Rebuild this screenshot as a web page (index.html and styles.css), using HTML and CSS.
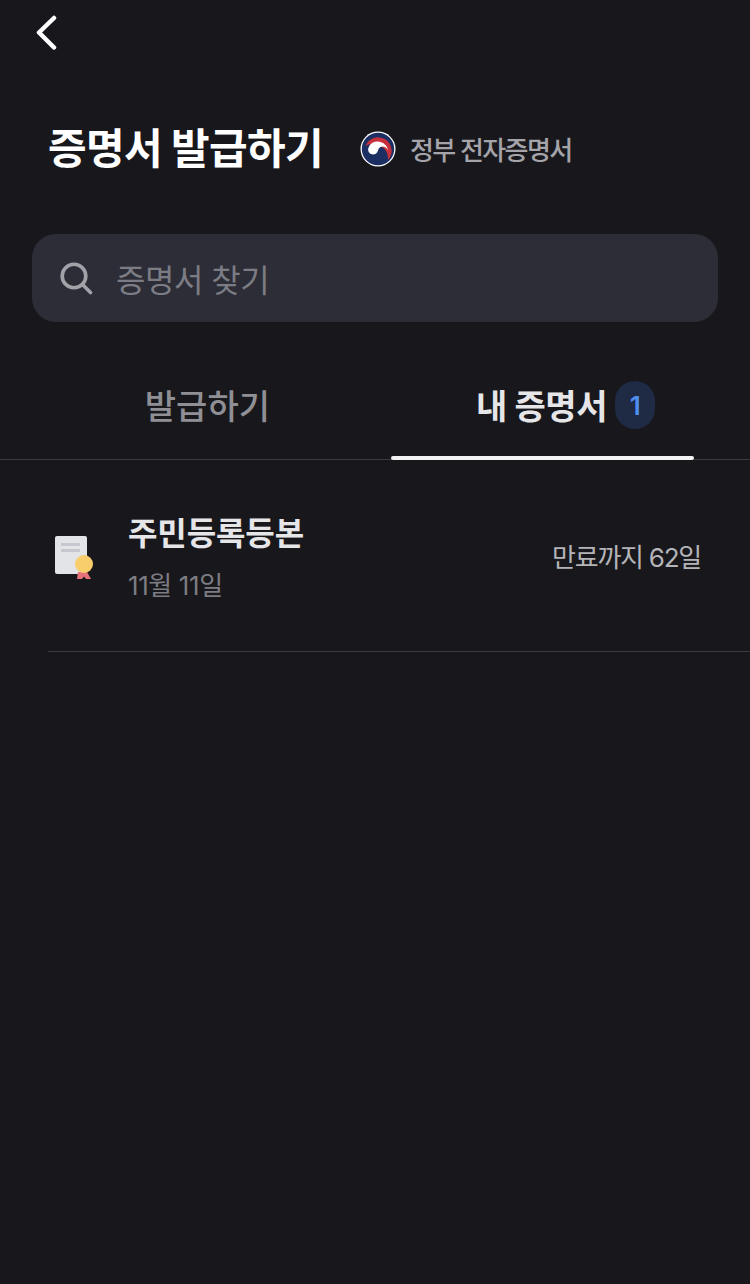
FILE: index.html
```html
<!DOCTYPE html>
<html lang="ko">
<head>
<meta charset="utf-8">
<title>증명서 발급하기</title>
<link rel="stylesheet" href="styles.css">
</head>
<body>
<div class="page">
  <div class="nav">
    <svg class="back" width="24" height="36" viewBox="0 0 24 36"><path d="M20 3 L5 17.500 L20 32.500" fill="none" stroke="#fff" stroke-width="4.500" stroke-linecap="round" stroke-linejoin="round"/></svg>
  </div>
  <div class="head">
    <h1 class="title">증명서 발급하기</h1>
    <svg class="emblem" width="36" height="36" viewBox="0 0 36 36">
      <circle cx="18" cy="18" r="17.500" fill="#fff"/>
      <circle cx="18" cy="18" r="16.200" fill="#1c2f63"/>
      <path d="M5.500 15 A13.500 13.500 0 1 1 28 29 A15 15 0 0 0 5.500 15Z" fill="#c8303c"/>
      <g transform="rotate(12 18 19.500)">
        <path d="M8 19.500 A10 9 0 0 1 28 19.500 A5 5 0 0 0 18 19.500 A5 5 0 0 1 8 19.500Z" fill="#fff"/>
      </g>
    </svg>
    <span class="gov">정부 전자증명서</span>
  </div>
  <div class="search">
    <svg width="34" height="34" viewBox="0 0 34 34"><circle cx="15" cy="15" r="11.800" fill="none" stroke="#a2a2a8" stroke-width="3.600"/><path d="M24 24 L31.500 31.500" stroke="#a2a2a8" stroke-width="3.600" stroke-linecap="round"/></svg>
    <span class="placeholder">증명서 찾기</span>
  </div>
  <div class="tabs">
    <div class="tab">발급하기</div>
    <div class="tab tab-active">
      <span>내 증명서</span>
      <span class="badge">1</span>
      <span class="underline"></span>
    </div>
  </div>
  <div class="row">
    <svg class="doc" width="40" height="46" viewBox="0 0 40 46">
      <rect x="1" y="1" width="32" height="38" rx="2" fill="#e3e4e8"/>
      <rect x="7" y="8" width="19" height="3" fill="#c6c8cf"/>
      <rect x="7" y="14" width="19" height="3" fill="#c6c8cf"/>
      <path d="M24 37 L33 37 L37 44 L32 44 L30 41.500 L28 44 L23 44Z" fill="#e8727a"/>
      <circle cx="30" cy="29" r="9" fill="#f8cd6b"/>
    </svg>
    <div class="info">
      <div class="name">주민등록등본</div>
      <div class="date">11월 11일</div>
    </div>
    <div class="expire">만료까지 62일</div>
  </div>
</div>
</body>
</html>
```
FILE: styles.css
```css
* { box-sizing: border-box; margin: 0; padding: 0; }
html, body { width: 750px; height: 1284px; background: #18181c; overflow: hidden; }
body { font-family: "Inter", "Noto Sans CJK KR", "Noto Sans", sans-serif; }
.page { width: 750px; height: 1284px; background: #18181c; display: flex; flex-direction: column; }
.nav { height: 50px; padding: 15px 0 0 34px; }
.back { display: block; }
.head { height: 64px; margin-top: 67px; padding-left: 48px; display: flex; align-items: center; }
.title { font-size: 42px; line-height: 64px; font-weight: 700; color: #fff; letter-spacing: -0.700px; width: 312px; white-space: nowrap; }
.emblem { flex: none; }
.gov { margin-left: 14px; margin-top: -2px; font-size: 26px; font-weight: 500; color: #a4a4aa; letter-spacing: -1.600px; white-space: nowrap; }
.search { margin: 53px 32px 0; height: 88px; border-radius: 24px; background: #2c2d36; display: flex; align-items: center; padding-left: 27px; }
.placeholder { margin-left: 23px; font-size: 32px; color: #7b7c84; letter-spacing: -0.500px; }
.tabs { margin-top: 48px; height: 90px; display: flex; padding-left: 24px; border-bottom: 1px solid #3a3a40; }
.tab { position: relative; display: flex; align-items: center; justify-content: center; height: 90px; font-size: 34px; font-weight: 500; color: #8f8f95; letter-spacing: 0.100px; width: 367px; padding-bottom: 22px; }
.tab-active { width: 303px; font-weight: 700; color: #e6e6e9; gap: 8px; padding-left: 46px; letter-spacing: -0.400px; }
.badge { width: 40px; height: 48px; margin-top: 2px; border-radius: 20px; background: #1f2a44; color: #4f8ff0; font: 600 26px "Inter", sans-serif; display: flex; align-items: center; justify-content: center; }
.underline { position: absolute; left: 0; right: 0; bottom: 0; height: 4px; border-radius: 2px; background: #f2f2f4; }
.row { margin-left: 48px; height: 192px; border-bottom: 1px solid #3a3a40; display: flex; align-items: center; padding-right: 49px; }
.doc { margin-left: 6px; margin-top: 4px; flex: none; }
.info { margin-left: 34px; margin-top: 3px; display: flex; flex-direction: column; gap: 11px; }
.name { font-size: 32px; line-height: 46px; font-weight: 700; color: #e6e6e9; letter-spacing: -0.100px; }
.date { font-size: 26px; line-height: 36px; color: #7c7c82; letter-spacing: -0.400px; }
.expire { margin-left: auto; font-size: 26px; color: #b4b4b9; letter-spacing: -1.250px; }
```
